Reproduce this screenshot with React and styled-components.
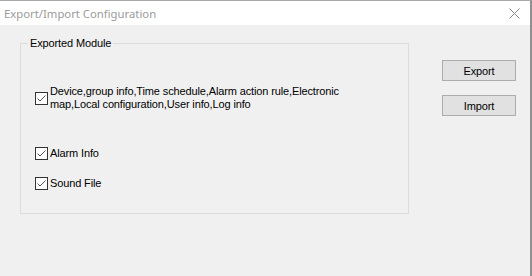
import React from 'react'
import styled, { createGlobalStyle } from 'styled-components'

const GlobalStyle = createGlobalStyle`
  html, body {
    margin: 0;
    padding: 0;
    background: #f0f0f0;
  }
  body {
    font-family: "Liberation Sans", Arial, sans-serif;
    font-size: 11px;
    letter-spacing: -0.13px;
    color: #000;
  }
`

function CheckBox({ checked }) {
  return (
    <Box>
      {checked && (
        <svg width="11" height="11" viewBox="0 0 11 11">
          <path d="M1.5 5.5 L4 8 L9.5 2.5" fill="none" stroke="#555" strokeWidth="1" />
        </svg>
      )}
    </Box>
  )
}

const items = [
  {
    id: 'base',
    label: 'Device,group info,Time schedule,Alarm action rule,Electronic map,Local configuration,User info,Log info',
    gap: 41
  },
  { id: 'alarm', label: 'Alarm Info', gap: 36 },
  { id: 'sound', label: 'Sound File', gap: 17 }
]

export default function App() {
  return (
    <>
      <GlobalStyle />
      <Window>
        <TitleBar>
          <Title>Export/Import Configuration</Title>
          <CloseButton aria-label="Close">
            <svg width="11" height="11" viewBox="0 0 11 11">
              <path d="M0.5 0.5 L10.5 10.5 M10.5 0.5 L0.5 10.5" stroke="#8a8a8a" strokeWidth="1" />
            </svg>
          </CloseButton>
        </TitleBar>
        <Body>
          <GroupBox>
            <Caption>Exported Module</Caption>
            {items.map((item) => (
              <CheckRow key={item.id} $gap={item.gap}>
                <CheckBox checked />
                <CheckLabel>{item.label}</CheckLabel>
              </CheckRow>
            ))}
          </GroupBox>
          <ButtonColumn>
            <Button>Export</Button>
            <Button>Import</Button>
          </ButtonColumn>
        </Body>
      </Window>
    </>
  )
}

const Window = styled.div`
  box-sizing: border-box;
  width: 532px;
  height: 276px;
  display: flex;
  flex-direction: column;
  background: #f0f0f0;
  border-top: 1px solid #a9a9a9;
  border-right: 2px solid #8f8f8f;
`

const TitleBar = styled.div`
  height: 24px;
  display: flex;
  align-items: center;
  justify-content: space-between;
  background: #fff;
  padding: 0 10px 0 4px;
`

const Title = styled.span`
  font-family: "Noto Sans", "Open Sans", sans-serif;
  font-size: 11.3px;
  letter-spacing: 0;
  color: #9b9b9b;
  margin-top: 1px;
`

const CloseButton = styled.div`
  display: flex;
  width: 11px;
  height: 11px;
  margin-top: 1px;
`

const Body = styled.div`
  flex: 1;
  display: flex;
  align-items: flex-start;
  padding: 18px 0 0 20px;
`

const GroupBox = styled.div`
  position: relative;
  box-sizing: border-box;
  width: 389px;
  height: 171px;
  border: 1px solid #dcdcdc;
  padding-left: 14px;
  display: flex;
  flex-direction: column;
`

const Caption = styled.span`
  position: absolute;
  top: -8px;
  left: 7px;
  padding: 0 2px;
  background: #f0f0f0;
  line-height: 14px;
`

const CheckRow = styled.div`
  display: flex;
  align-items: center;
  gap: 2px;
  margin-top: ${(p) => p.$gap}px;
`

const Box = styled.div`
  flex: none;
  box-sizing: border-box;
  width: 13px;
  height: 13px;
  border: 1px solid #333;
  background: #fff;
  display: flex;
  align-items: center;
  justify-content: center;
`

const CheckLabel = styled.span`
  line-height: 13px;
  width: 300px;
`

const ButtonColumn = styled.div`
  display: flex;
  flex-direction: column;
  gap: 14px;
  margin: 17px 0 0 33px;
`

const Button = styled.div`
  box-sizing: border-box;
  width: 74px;
  height: 21px;
  display: flex;
  align-items: center;
  justify-content: center;
  background: #e1e1e1;
  border: 1px solid #adadad;
`
